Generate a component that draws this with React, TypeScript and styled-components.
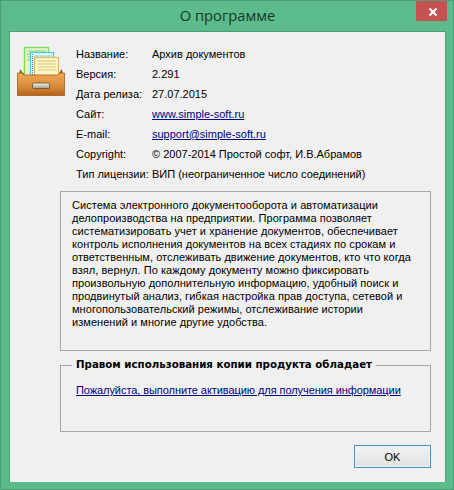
import styled, { createGlobalStyle } from "styled-components";

const infoRows = [
  { label: "Название:", value: "Архив документов" },
  { label: "Версия:", value: "2.291" },
  { label: "Дата релиза:", value: "27.07.2015" },
  { label: "Сайт:", value: "www.simple-soft.ru", link: true },
  { label: "E-mail:", value: "support@simple-soft.ru", link: true },
  { label: "Copyright:", value: "© 2007-2014 Простой софт, И.В.Абрамов" },
  { label: "Тип лицензии:", value: "ВИП (неограниченное число соединений)" },
];

const descriptionLines = [
  "Система электронного документооборота и автоматизации",
  "делопроизводства на предприятии. Программа позволяет",
  "систематизировать учет и хранение документов, обеспечивает",
  "контроль исполнения документов на всех стадиях по срокам и",
  "ответственным, отслеживать движение документов, кто что когда",
  "взял, вернул. По каждому документу можно фиксировать",
  "произвольную дополнительную информацию, удобный поиск и",
  "продвинутый анализ, гибкая настройка прав доступа, сетевой и",
  "многопользовательский режимы, отслеживание истории",
  "изменений и многие другие удобства.",
];

function ArchiveIcon() {
  return (
    <svg width="48" height="50" viewBox="0 0 48 50">
      <defs>
        <linearGradient id="drawer" x1="0" y1="0" x2="0" y2="1">
          <stop offset="0" stopColor="#f0aa58" />
          <stop offset="0.6" stopColor="#d98a38" />
          <stop offset="1" stopColor="#b3621a" />
        </linearGradient>
        <linearGradient id="handle" x1="0" y1="0" x2="0" y2="1">
          <stop offset="0" stopColor="#f6f3ea" />
          <stop offset="1" stopColor="#a39d8c" />
        </linearGradient>
      </defs>
      <path d="M3 23 L6 27 L42 27 L45 23 L46 30 L2 30 Z" fill="#8a5a1c" />
      <rect x="7.5" y="1.5" width="24" height="30" fill="#e2f8d0" stroke="#7be05e" strokeWidth="1.4" />
      <path d="M10 5h19M10 8h19M10 11h19M10 14h19" stroke="#86d672" />
      <rect x="13.5" y="6.5" width="23" height="25" fill="#e8f9fc" stroke="#4cc4dc" strokeWidth="1.2" />
      <path d="M17 10h18M17 13h18M17 16h18" stroke="#93c8da" />
      <path d="M15.5 8v22" stroke="#4d7f9e" strokeDasharray="1 1" />
      <rect x="17.5" y="11.5" width="24" height="21" fill="#fdf6c8" stroke="#e4bb50" strokeWidth="1.2" />
      <path d="M21 15h18M21 18h18M21 21h18M21 24h18" stroke="#d8c46c" />
      <path d="M0.5 27 L5 27 L7 29 L41 29 L43 27 L47.5 27 L47.5 49.5 L0.5 49.5 Z" fill="url(#drawer)" stroke="#a85c18" strokeWidth="0.8" />
      <rect x="15.5" y="37" width="17" height="5.5" rx="1" fill="url(#handle)" stroke="#6d4a24" strokeWidth="0.8" />
    </svg>
  );
}

export default function App() {
  return (
    <>
      <GlobalStyle />
      <Window>
        <TitleBar>
          <Title>О программе</Title>
          <CloseButton>
            <svg width="10" height="10" viewBox="0 0 10 10">
              <path d="M1.5 1.5 L8.5 8.5 M8.5 1.5 L1.5 8.5" stroke="#fff" strokeWidth="2" />
            </svg>
          </CloseButton>
        </TitleBar>
        <Client>
          <Header>
            <IconSlot>
              <ArchiveIcon />
            </IconSlot>
            <InfoList>
              {infoRows.map((row) => (
                <InfoRow key={row.label}>
                  <InfoLabel>{row.label}</InfoLabel>
                  {row.link ? <LinkText>{row.value}</LinkText> : <span>{row.value}</span>}
                </InfoRow>
              ))}
            </InfoList>
          </Header>
          <Content>
            <Description>
              {descriptionLines.map((line) => (
                <div key={line}>{line}</div>
              ))}
            </Description>
            <GroupBox>
              <Legend>Правом использования копии продукта обладает</Legend>
              <ActivationLink>Пожалуйста, выполните активацию для получения информации</ActivationLink>
            </GroupBox>
            <Footer>
              <OkButton>OK</OkButton>
            </Footer>
          </Content>
        </Client>
      </Window>
    </>
  );
}

const GlobalStyle = createGlobalStyle`
  html, body {
    margin: 0;
    padding: 0;
    background: #5cbb8c;
  }
`;
const Window = styled.div`
  box-sizing: border-box;
  width: 454px;
  height: 490px;
  display: flex;
  flex-direction: column;
  padding: 0 7px 7px 8px;
  background: #5cbb8c;
  border: 1px solid #4b9f76;
  font-family: "Liberation Sans", Arial, sans-serif;
  font-size: 11px;
  color: #000;
`;
const TitleBar = styled.div`
  position: relative;
  height: 30px;
  flex-shrink: 0;
  display: flex;
  align-items: center;
  justify-content: center;
`;
const Title = styled.div`
  font-family: "Open Sans", "Liberation Sans", sans-serif;
  font-size: 14.7px;
  color: #17392a;
  padding-bottom: 3px;
`;
const CloseButton = styled.div`
  position: absolute;
  top: 0;
  right: -1px;
  box-sizing: border-box;
  width: 31px;
  height: 20px;
  padding: 1px 0 0 2px;
  background: #c75050;
  display: flex;
  align-items: center;
  justify-content: center;
`;
const Client = styled.div`
  flex: 1;
  display: flex;
  flex-direction: column;
  background: #f0f0f0;
  border: 1px solid #4b9f76;
  border-bottom: none;
  padding: 0 14px 0 7px;
`;
const Header = styled.div`
  display: flex;
  padding-top: 12px;
`;
const IconSlot = styled.div`
  width: 59px;
  flex-shrink: 0;
  margin-top: 2px;
`;
const InfoList = styled.div`
  display: flex;
  flex-direction: column;
`;
const InfoRow = styled.div`
  display: flex;
  height: 20px;
  align-items: center;
`;
const InfoLabel = styled.span`
  width: 76px;
  flex-shrink: 0;
`;
const LinkText = styled.span`
  color: #000080;
  text-decoration: underline;
`;
const ActivationLink = styled(LinkText)`
  letter-spacing: -0.07px;
`;
const Content = styled.div`
  margin-left: 43px;
  display: flex;
  flex-direction: column;
`;
const Description = styled.div`
  margin-top: 7px;
  height: 160px;
  box-sizing: border-box;
  padding: 7px 0 0 11px;
  border: 1px solid #a8a89f;
  line-height: 13px;
  letter-spacing: 0.05px;
  white-space: nowrap;
`;
const GroupBox = styled.div`
  position: relative;
  margin-top: 14px;
  height: 67px;
  box-sizing: border-box;
  padding: 18px 0 0 15px;
  border: 1px solid #a8a89f;
`;
const Legend = styled.div`
  position: absolute;
  top: -8px;
  left: 11px;
  padding: 0 4px;
  background: #f0f0f0;
  font-family: "DejaVu Sans", Verdana, sans-serif;
  font-size: 10.25px;
  font-weight: 700;
  white-space: nowrap;
`;
const Footer = styled.div`
  display: flex;
  justify-content: flex-end;
  margin-top: 13px;
`;
const OkButton = styled.button`
  width: 77px;
  height: 23px;
  padding: 0;
  border: 1px solid #4a90c8;
  box-shadow: inset 0 0 0 1px #eaf3fa;
  background: linear-gradient(#f2f2f2, #e2e2e2);
  font: inherit;
  font-size: 11px;
  color: #000;
`;
